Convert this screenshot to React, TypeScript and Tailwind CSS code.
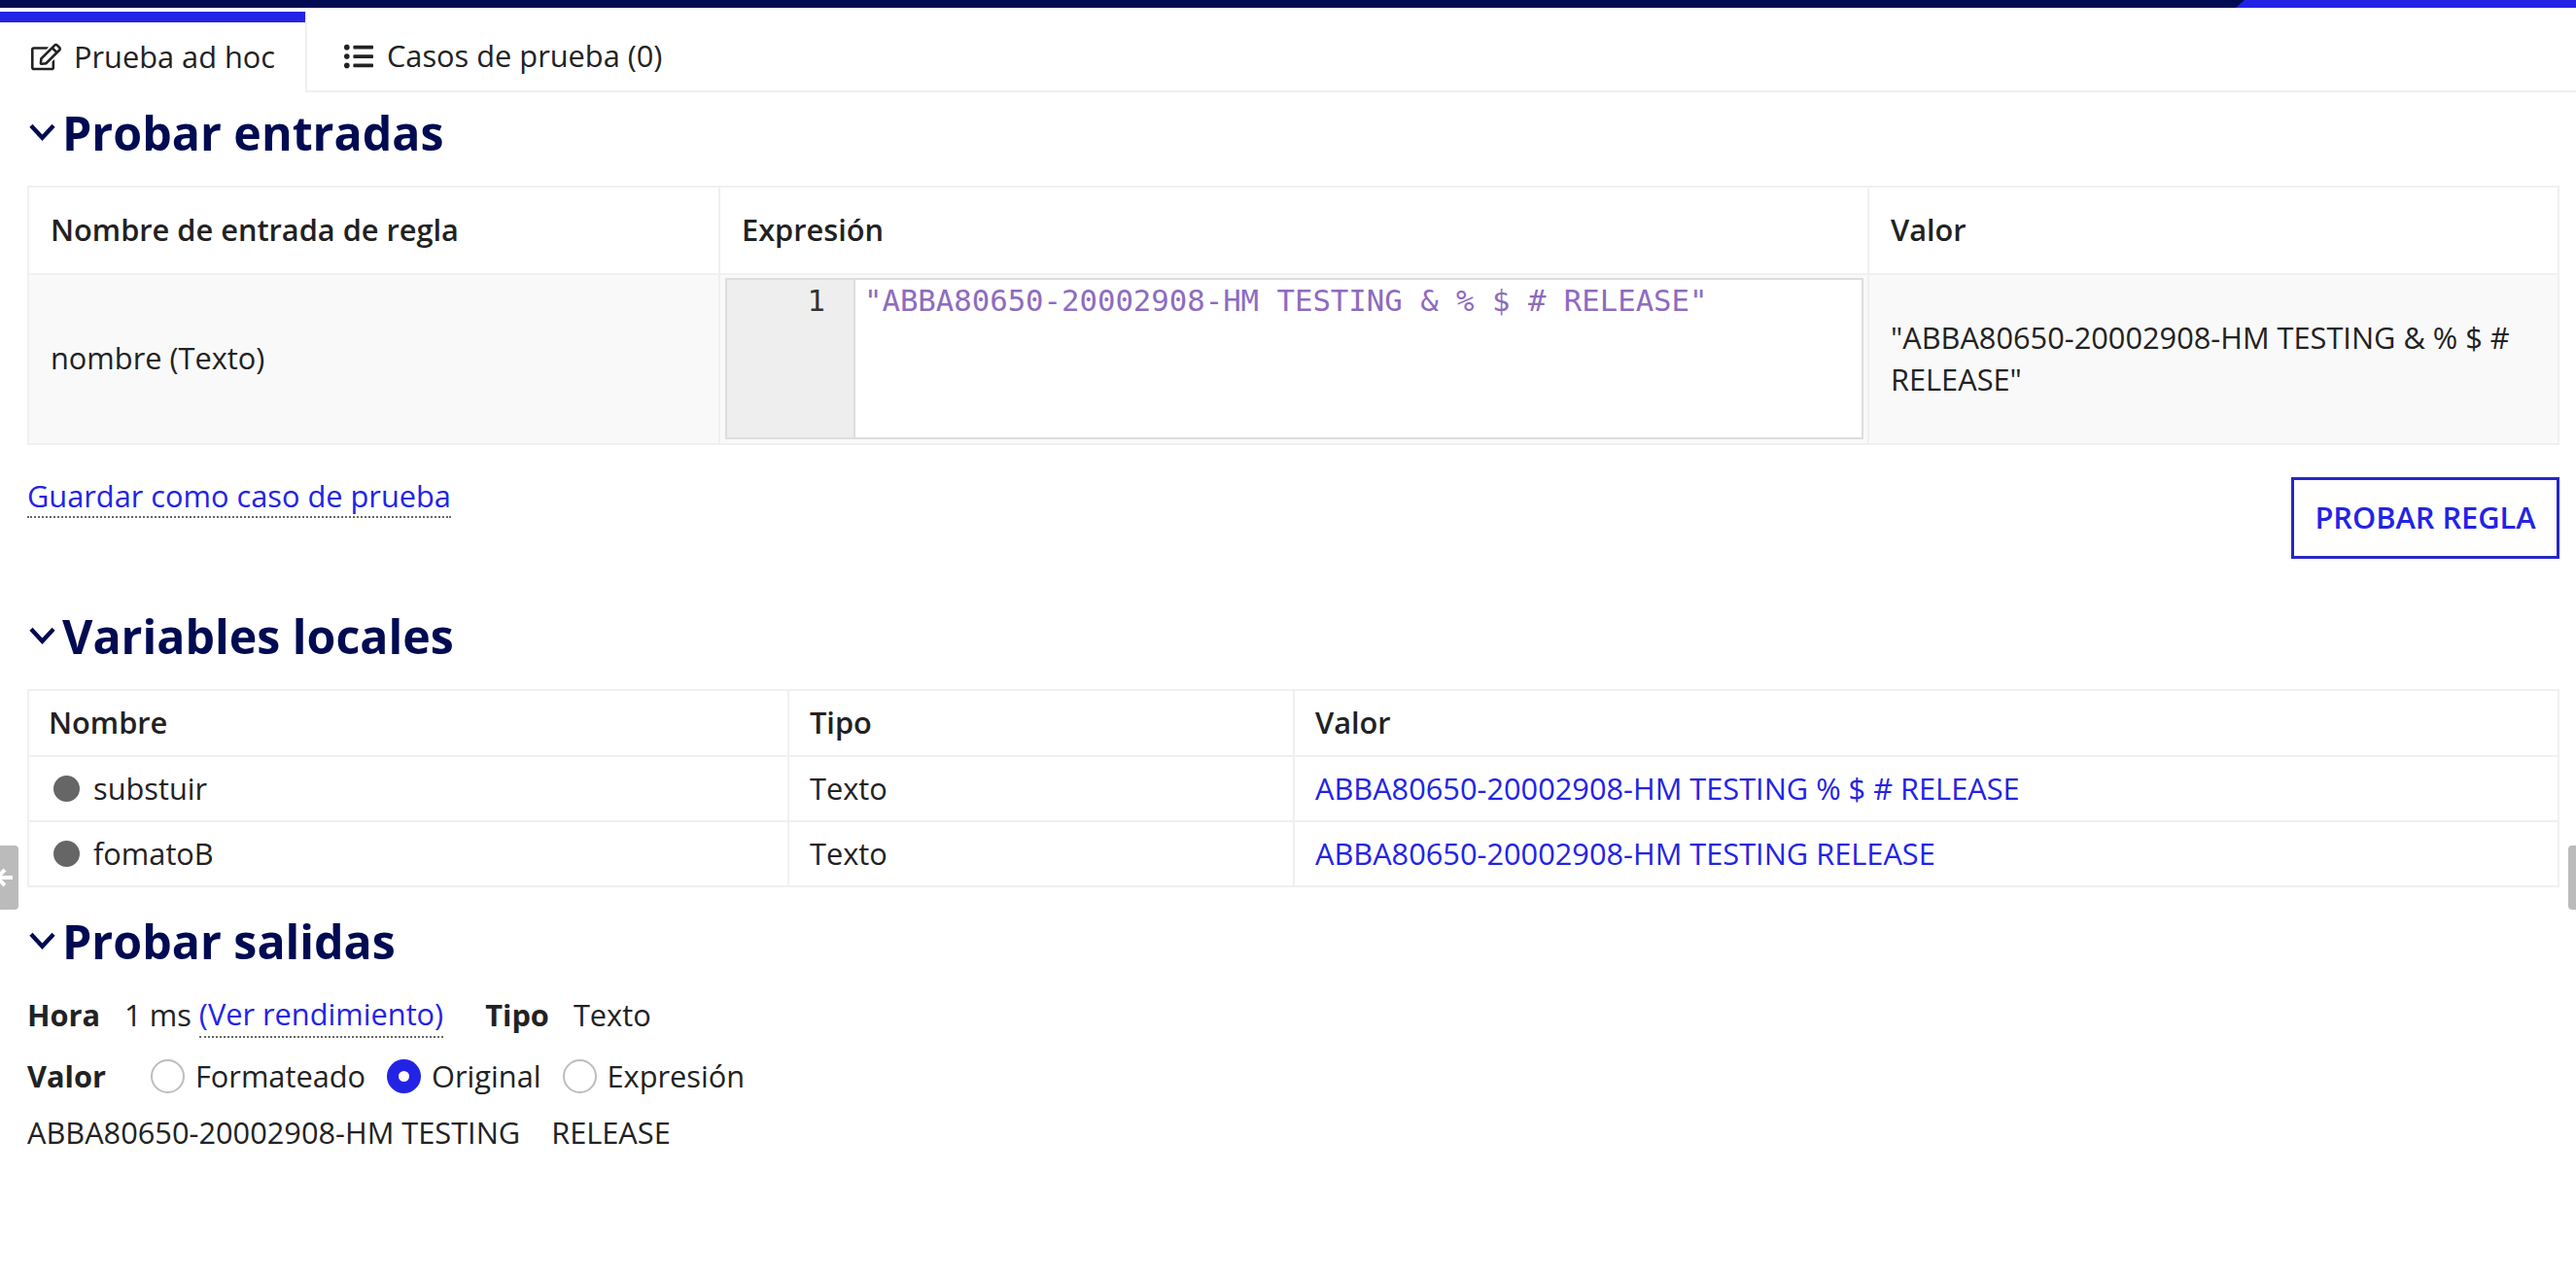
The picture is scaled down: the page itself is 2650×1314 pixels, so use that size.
import { FaListUl, FaRegEdit } from "react-icons/fa";

const body = "font-['Open_Sans',sans-serif] text-[30.75px] text-[#222222]";

function SectionTitle({ title, className }: { title: string; className: string }) {
  return (
    <h2 className={`flex h-[60px] items-center text-[48.3px] leading-none font-bold text-[#000b52] ${className}`}>
      <svg viewBox="0 0 28 20" className="mr-[7px] ml-[30px] h-[20px] w-[27px]" fill="none" stroke="#000b52" strokeWidth="4.5">
        <path d="M2 3l12 13L26 3" />
      </svg>
      {title}
    </h2>
  );
}

function DottedLink({ children }: { children: React.ReactNode }) {
  return <span className="border-b-2 border-dotted border-[#666666] text-[#2323e6]">{children}</span>;
}

function Radio({ label, checked }: { label: string; checked?: boolean }) {
  return (
    <span className="flex items-center gap-[11px]">
      {checked ? (
        <span className="flex size-[35px] items-center justify-center rounded-full bg-[#2323e6]">
          <span className="size-[11px] rounded-full bg-white" />
        </span>
      ) : (
        <span className="size-[35px] rounded-full border-2 border-[#bdbdbd] bg-white" />
      )}
      {label}
    </span>
  );
}

function VariableRow({ name, value }: { name: string; value: string }) {
  return (
    <div className="grid h-[67px] grid-cols-[782px_520px_1fr] border-t-2 border-[#f0f0f0]">
      <div className="flex items-center gap-[14px] border-r-2 border-[#f0f0f0] pl-[25px]">
        <span className="size-[27px] rounded-full bg-[#666666]" />
        {name}
      </div>
      <div className="flex items-center border-r-2 border-[#f0f0f0] pl-[21px]">Texto</div>
      <div className="flex items-center pl-[21px] text-[#2323e6]">{value}</div>
    </div>
  );
}

export default function App() {
  return (
    <div className={`relative h-[1314px] overflow-hidden bg-white ${body}`}>
      <div className="h-[8px] bg-[#000b52]">
        <div className="ml-auto h-full w-[350px] bg-[#2323e6] [clip-path:polygon(9px_0,100%_0,100%_100%,0_100%)]" />
      </div>

      <div className="flex h-[87px] border-b-2 border-[#f0f0f0] pt-[4px]">
        <div className="-mb-[2px] w-[316px] border-r-2 border-[#f0f0f0] bg-white">
          <div className="h-[11px] bg-[#2323e6]" />
          <div className="flex h-[72px] items-center pb-[1px] pl-[32px]">
            <FaRegEdit className="mr-[13px] text-[31px]" />
            Prueba ad hoc
          </div>
        </div>
        <div className="flex items-center pt-[10px] pl-[38px]">
          <FaListUl className="mr-[14px] text-[30px]" />
          Casos de prueba (0)
        </div>
      </div>

      <SectionTitle title="Probar entradas" className="mt-[11px]" />

      <div className="mt-[25px] mr-[17px] ml-[28px] border-2 border-[#f0f0f0]">
        <div className="grid h-[88px] grid-cols-[711px_1182px_1fr] font-semibold">
          <div className="flex items-center border-r-2 border-[#f0f0f0] pb-[2px] pl-[22px]">Nombre de entrada de regla</div>
          <div className="flex items-center border-r-2 border-[#f0f0f0] pb-[2px] pl-[22px]">Expresión</div>
          <div className="flex items-center pb-[2px] pl-[22px]">Valor</div>
        </div>
        <div className="grid h-[175px] grid-cols-[711px_1182px_1fr] border-t-2 border-[#f0f0f0] bg-[#f9f9f9]">
          <div className="flex items-center border-r-2 border-[#f0f0f0] pb-[2px] pl-[22px]">nombre (Texto)</div>
          <div className="border-r-2 border-[#f0f0f0] py-[3px] pr-[4px] pl-[5px]">
            <div className="flex h-[166px] border-2 border-[#dddddd] bg-white font-['DejaVu_Sans_Mono',monospace] text-[30.66px] leading-[40px]">
              <div className="w-[132px] border-r-2 border-[#dddddd] bg-[#eeeeee] pt-[2px] pr-[29px] text-right text-[#333333]">1</div>
              <div className="pt-[2px] pl-[9px] text-[#8e6bbf]">"ABBA80650-20002908-HM TESTING &amp; % $ # RELEASE"</div>
            </div>
          </div>
          <div className="flex items-center pr-[20px] pb-[2px] pl-[22px] leading-[43px]">"ABBA80650-20002908-HM TESTING &amp; % $ # RELEASE"</div>
        </div>
      </div>

      <div className="mt-[33px] mr-[17px] ml-[28px] flex items-start justify-between">
        <span className="mt-[-4px]">
          <DottedLink>Guardar como caso de prueba</DottedLink>
        </span>
        <button type="button" className="h-[84px] w-[276px] border-[3px] border-[#2626c4] pb-[2px] font-semibold text-[#2323e6]">
          PROBAR REGLA
        </button>
      </div>

      <SectionTitle title="Variables locales" className="mt-[49px]" />

      <div className="mt-[25px] mr-[17px] ml-[28px] border-2 border-[#f0f0f0]">
        <div className="grid h-[66px] grid-cols-[782px_520px_1fr] font-semibold">
          <div className="flex items-center border-r-2 border-[#f0f0f0] pb-[2px] pl-[20px]">Nombre</div>
          <div className="flex items-center border-r-2 border-[#f0f0f0] pb-[2px] pl-[21px]">Tipo</div>
          <div className="flex items-center pb-[2px] pl-[21px]">Valor</div>
        </div>
        <VariableRow name="substuir" value="ABBA80650-20002908-HM TESTING % $ # RELEASE" />
        <VariableRow name="fomatoB" value="ABBA80650-20002908-HM TESTING RELEASE" />
      </div>

      <SectionTitle title="Probar salidas" className="mt-[25px]" />

      <div className="mx-[28px] mt-[24px] flex h-[44px] items-center">
        <span className="mr-[25px] font-bold">Hora</span>
        <span className="mr-[8px]">1 ms</span>
        <DottedLink>(Ver rendimiento)</DottedLink>
        <span className="mr-[25px] ml-[43px] font-bold">Tipo</span>
        Texto
      </div>

      <div className="mx-[28px] mt-[19px] flex h-[44px] items-center">
        <span className="mr-[46px] font-bold">Valor</span>
        <div className="flex items-center gap-[22px]">
          <Radio label="Formateado" />
          <Radio label="Original" checked />
          <Radio label="Expresión" />
        </div>
      </div>

      <div className="mx-[28px] mt-[13px] whitespace-pre">ABBA80650-20002908-HM TESTING    RELEASE</div>

      <div className="absolute top-[870px] left-0 flex h-[66px] w-[19px] items-center justify-end overflow-hidden rounded-r-[4px] bg-[#bbbbbb]">
        <svg viewBox="0 0 20 20" className="mr-[5px] size-[20px] shrink-0" fill="none" stroke="#ffffff" strokeWidth="4">
          <path d="M11 2l-8 8 8 8M3 10h16" />
        </svg>
      </div>
      <div className="absolute top-[870px] right-0 h-[66px] w-[8px] rounded-l-[4px] bg-[#bbbbbb]" />
    </div>
  );
}
